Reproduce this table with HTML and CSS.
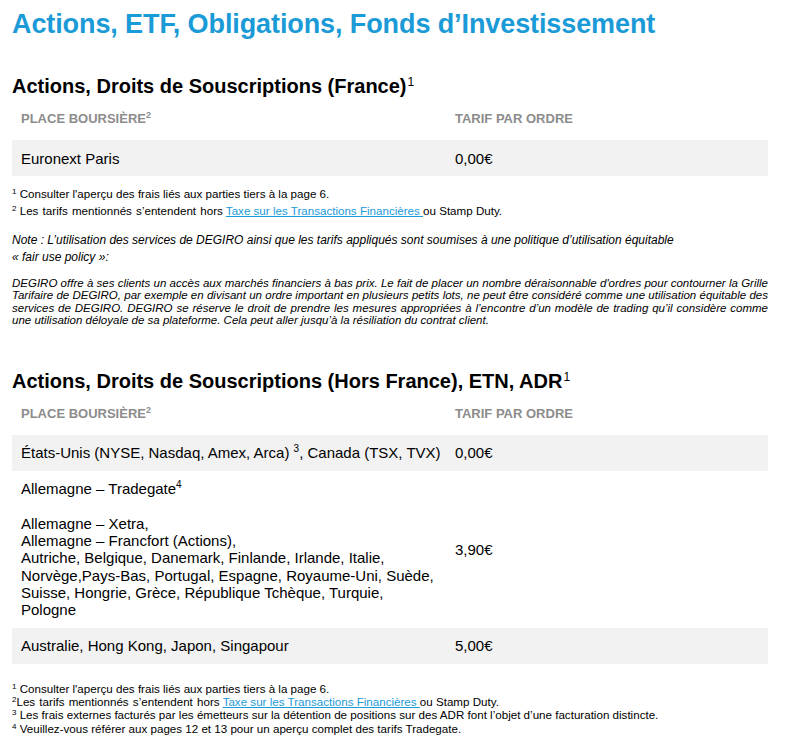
FILE: index.html
```html
<!DOCTYPE html>
<html lang="fr">
<head>
<meta charset="utf-8">
<title>Actions, ETF, Obligations, Fonds d’Investissement</title>
<link rel="stylesheet" href="styles.css">
</head>
<body>
<main class="page">
  <h1 class="page-title">Actions, ETF, Obligations, Fonds d’Investissement</h1>

  <section class="fee-section first">
    <h2 class="section-title">Actions, Droits de Souscriptions (France)<sup class="h-sup">1</sup></h2>
    <table class="fee-table">
      <colgroup><col class="col-place"><col class="col-tarif"></colgroup>
      <thead>
        <tr><th>PLACE BOURSIÈRE<sup class="th-sup">2</sup></th><th>TARIF PAR ORDRE</th></tr>
      </thead>
      <tbody>
        <tr class="shaded"><td>Euronext Paris</td><td>0,00€</td></tr>
      </tbody>
    </table>
    <div class="footnotes top-notes">
      <p><sup class="fn-sup">1</sup> Consulter l'aperçu des frais liés aux parties tiers à la page 6.</p>
      <p><sup class="fn-sup">2</sup> <span class="spread">Les tarifs mentionnés s’entendent hors</span> <a class="fn-link" href="#">Taxe sur les Transactions Financières </a>ou Stamp Duty.</p>
    </div>
    <p class="note">Note : L’utilisation des services de DEGIRO ainsi que les tarifs appliqués sont soumises à une politique d’utilisation équitable<br>« fair use policy »:</p>
    <p class="policy">DEGIRO offre à ses clients un accès aux marchés financiers à bas prix. Le fait de placer un nombre déraisonnable d'ordres pour contourner la Grille Tarifaire de DEGIRO, par exemple en divisant un ordre important en plusieurs petits lots, ne peut être considéré comme une utilisation équitable des services de DEGIRO. DEGIRO se réserve le droit de prendre les mesures appropriées à l’encontre d’un modèle de trading qu’il considère comme une utilisation déloyale de sa plateforme. Cela peut aller jusqu’à la résiliation du contrat client.</p>
  </section>

  <section class="fee-section second">
    <h2 class="section-title">Actions, Droits de Souscriptions (Hors France), ETN, ADR<sup class="h-sup">1</sup></h2>
    <table class="fee-table">
      <colgroup><col class="col-place"><col class="col-tarif"></colgroup>
      <thead>
        <tr><th>PLACE BOURSIÈRE<sup class="th-sup">2</sup></th><th>TARIF PAR ORDRE</th></tr>
      </thead>
      <tbody>
        <tr class="shaded"><td class="nowrap">États-Unis (NYSE, Nasdaq, Amex, Arca) <sup class="td-sup">3</sup>, Canada (TSX, TVX)</td><td>0,00€</td></tr>
        <tr>
          <td>Allemagne – Tradegate<sup class="td-sup">4</sup><br><br>Allemagne – Xetra,<br>Allemagne – Francfort (Actions),<br>Autriche, Belgique, Danemark, Finlande, Irlande, Italie,<br>Norvège,Pays-Bas, Portugal, Espagne, Royaume-Uni, Suède,<br>Suisse, Hongrie, Grèce, République Tchèque, Turquie,<br>Pologne</td>
          <td>3,90€</td>
        </tr>
        <tr class="shaded"><td>Australie, Hong Kong, Japon, Singapour</td><td>5,00€</td></tr>
      </tbody>
    </table>
    <div class="footnotes bottom-notes">
      <p><sup class="fn-sup">1</sup> Consulter l'aperçu des frais liés aux parties tiers à la page 6.</p>
      <p><sup class="fn-sup">2</sup><span class="spread">Les tarifs mentionnés s’entendent hors</span> <a class="fn-link" href="#">Taxe sur les Transactions Financières </a>ou Stamp Duty.</p>
      <p><sup class="fn-sup">3</sup> Les frais externes facturés par les émetteurs sur la détention de positions sur des ADR font l’objet d’une facturation distincte.</p>
      <p><sup class="fn-sup">4</sup> Veuillez-vous référer aux pages 12 et 13 pour un aperçu complet des tarifs Tradegate.</p>
    </div>
  </section>
</main>
</body>
</html>
```
FILE: styles.css
```css
html, body {
  margin: 0;
  padding: 0;
  background: #ffffff;
}

body {
  font-family: "Liberation Sans", Arial, sans-serif;
  color: #000000;
}

.page {
  width: 756px;
  padding: 0 12px;
}

.page-title {
  margin: 8px 0 0;
  font-size: 27px;
  line-height: 32px;
  font-weight: bold;
  letter-spacing: -0.1px;
  color: #1a9ad6;
}

.fee-section.first {
  margin-top: 34px;
}

.fee-section.second {
  margin-top: 42px;
}

.section-title {
  margin: 0;
  font-size: 20px;
  line-height: 24px;
  font-weight: bold;
  color: #000;
}

.h-sup {
  font-size: 12px;
  line-height: 0;
  vertical-align: 7px;
  font-weight: normal;
  margin-left: 1px;
}

.fee-table {
  width: 756px;
  border-collapse: collapse;
  table-layout: fixed;
}

.col-place {
  width: 434px;
}

.fee-table th {
  text-align: left;
  font-size: 13px;
  line-height: 15px;
  font-weight: bold;
  color: #8c8c8c;
  padding: 13px 9px 14px 9px;
}

.th-sup {
  font-size: 9px;
  line-height: 0;
  vertical-align: 5px;
}

.fee-table td {
  font-size: 15px;
  line-height: 17.25px;
  padding: 9.5px 0 9.5px 9px;
  vertical-align: middle;
}

.fee-table tr.shaded td {
  background: #f2f2f2;
}

.nowrap {
  white-space: nowrap;
}

.td-sup {
  font-size: 10px;
  line-height: 0;
  vertical-align: 6px;
}

.footnotes {
  font-size: 11.6px;
  color: #000;
}

.footnotes p {
  margin: 0;
}

.top-notes {
  margin-top: 9px;
  line-height: 17px;
}

.bottom-notes {
  margin-top: 17.5px;
  line-height: 13.3px;
}

.fn-sup {
  font-size: 8px;
  line-height: 0;
  vertical-align: 4px;
}

.spread {
  word-spacing: 1px;
}

.fn-link {
  color: #1a9ad6;
  text-decoration: underline;
}

.note {
  margin: 12.5px 0 0;
  font-size: 12px;
  line-height: 17px;
  font-style: italic;
}

.policy {
  margin: 11.3px 0 0;
  font-size: 11.5px;
  line-height: 12.4px;
  font-style: italic;
  text-align: justify;
}
```
